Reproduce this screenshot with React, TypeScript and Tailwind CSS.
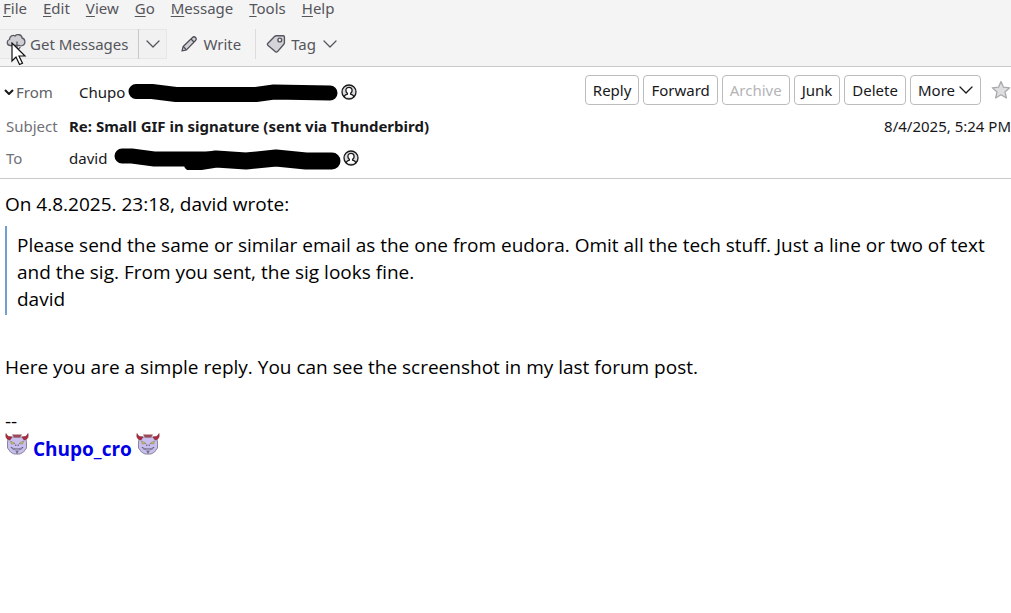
import type { ReactNode } from 'react';

const menus = ['File', 'Edit', 'View', 'Go', 'Message', 'Tools', 'Help'];

function Chevron({ className }: { className?: string }) {
  return (
    <svg viewBox="0 0 14 8" fill="none" stroke="currentColor" strokeWidth="1.3" strokeLinecap="round" strokeLinejoin="round" className={`h-2 w-[14px] ${className ?? ''}`}>
      <path d="M1 1l6 6 6-6" />
    </svg>
  );
}

function CloudDownload() {
  return (
    <svg viewBox="0 0 20 20" fill="#cfcfd4" stroke="#5b5b66" strokeWidth="1.3" strokeLinecap="round" strokeLinejoin="round" className="h-5 w-5">
      <path d="M4.500 11.500C.5 11.500.3 6.500 3.500 5.500 3.500 2 7 .5 9 2c2-2.500 7-1.500 7 2 3.500.5 4 6.500.5 7.500-1 .5-2 .3-3 0h-6c-1 .3-2 .3-3 0z" />
      <path d="M11 8v8M8 13.500l3 3 3-3" fill="none" />
    </svg>
  );
}

function Pencil() {
  return (
    <svg viewBox="0 0 16 16" fill="#cfcfd4" stroke="#4a4a52" strokeWidth="1.2" strokeLinejoin="round" className="h-4 w-4">
      <path d="M1 15l1.200-4.500L11.500 1.500a2 2 0 0 1 3 3L5.500 13.800z" />
      <path d="M10 3l3 3M2.200 10.500l3.300 3.300" />
    </svg>
  );
}

function TagIcon() {
  return (
    <svg viewBox="0 0 20 20" fill="#d4d4d8" stroke="#55555f" strokeWidth="1.4" strokeLinejoin="round" className="h-5 w-5">
      <path d="M1.700 9.500L8.500 2.600Q9.200 1.800 10.200 1.800H17.300Q18.400 1.800 18.400 3V8.500Q18.400 9.500 17.800 10.200L11.500 17.600Q10.500 18.600 9.500 17.700L1.800 11.200Q1 10.300 1.700 9.500z" />
      <circle cx="13.800" cy="6" r="1.900" fill="#f4f4f4" />
    </svg>
  );
}

function Contact() {
  return (
    <svg viewBox="0 0 16 16" fill="#fff" stroke="#18181b" strokeWidth="1.3" strokeLinejoin="round" className="h-4 w-4 shrink-0">
      <circle cx="8" cy="8" r="7" fill="#dcdcdf" />
      <path d="M3.500 13v-1c.3-1 1.500-1.400 2.900-1.800V9.300C5.300 8.600 4.900 7.600 4.900 6.500c0-2 1.200-3.200 3.100-3.200s3.100 1.200 3.100 3.200c0 1.100-.4 2.100-1.500 2.800v.9c1.400.4 2.600.8 2.900 1.800v1" />
    </svg>
  );
}

function Devil() {
  return (
    <svg viewBox="0 0 24 22" className="h-[22px] w-6">
      <path d="M3.500 4h17l1 5v6l-3 4-3.500 2H9l-3.500-2-3-4V9z" fill="#c9bfee" stroke="#8a86a0" />
      <path d="M7 1.500h10l-2 3H9z" fill="#9c4a58" />
      <path d="M1 .5c-.7 4 .5 6 4 6.500L7 4C4 4 2 3 1 .5zM23 .5c.7 4-.5 6-4 6.500L17 4c3 0 5-1 6-3.500z" fill="#b02a3c" stroke="#732035" strokeWidth=".5" />
      <path d="M5.500 8l4.500 2.500-3.500.5zM18.500 8L14 10.500l3.500.5z" fill="#e3d44e" stroke="#7d755c" strokeWidth=".6" />
      <path d="M10.800 11.500v1.500M13.200 11.500v1.500" stroke="#554d75" />
      <path d="M6 14c2 2.500 10 2.500 12 0-1 4-11 4-12 0z" fill="#fff" stroke="#5c5678" strokeWidth=".8" />
      <path d="M10.500 18h3L12 21.500z" fill="#737080" />
    </svg>
  );
}

function Cursor() {
  return (
    <svg viewBox="0 0 16 24" fill="#fff" stroke="#111" strokeWidth="1.2" className="absolute top-[42px] left-[11px] h-6 w-4">
      <path d="M1 1v18l4-4 3.500 7.500 3-1.300L8 14h6z" />
    </svg>
  );
}

function HeaderButton({ children, disabled }: { children: ReactNode; disabled?: boolean }) {
  return (
    <button
      disabled={disabled}
      className="flex h-[30px] items-center gap-1 rounded border border-[#bcbcbf] px-[7px] whitespace-nowrap disabled:text-[#b4b4b7]"
    >
      {children}
    </button>
  );
}

export default function App() {
  return (
    <div className="min-h-screen bg-white font-['Noto_Sans',sans-serif] text-[15px] leading-5 text-[#18181b]">
      <header className="relative border-b border-[#c9c9c9] bg-[#f4f4f4] text-[#55555c]">
        <nav className="flex h-4 items-center gap-4 px-[3px]">
          {menus.map((name) => (
            <button key={name} className="leading-[18px]">
              <span className="underline underline-offset-2">{name[0]}</span>
              {name.slice(1)}
            </button>
          ))}
        </nav>
        <div className="flex h-[50px] items-center pt-[6px]">
          <div className="flex h-[30px] items-center border-y border-r border-[#e6e6e6] bg-[#f1f1f1]">
            <button className="flex items-center gap-1 pr-[10px] pl-[6px]">
              <CloudDownload />
              Get Messages
            </button>
            <button aria-label="Get messages options" className="flex h-[30px] w-7 items-center justify-center border-l border-[#c8c8c8]">
              <Chevron />
            </button>
          </div>
          <button className="flex items-center gap-[6px] px-[14px]">
            <Pencil />
            Write
          </button>
          <button className="flex h-[30px] items-center gap-[5px] border-l border-[#dcdcdc] pl-[10px]">
            <TagIcon />
            Tag
            <Chevron className="ml-[2px]" />
          </button>
        </div>
        <Cursor />
      </header>

      <section className="border-b border-[#c9c9c9] pb-[2px]">
        <div className="flex h-[45px] items-center justify-between">
          <div className="flex items-center pt-[5px]">
            <button className="flex w-[79px] items-center gap-[2px] pl-1 text-[#5f5f66]">
              <svg viewBox="0 0 10 6" fill="none" stroke="#18181b" strokeWidth="2" className="h-[6px] w-[10px]">
                <path d="M1 1l4 4 4-4" />
              </svg>
              From
            </button>
            <span>Chupo</span>
            <svg viewBox="0 0 216 20" className="h-5 w-[216px]">
              <path d="M11 9.500h16l24 3h80l18-2.500 56 1" fill="none" stroke="#000" strokeWidth="15" strokeLinecap="round" strokeLinejoin="round" />
            </svg>
            <Contact />
          </div>
          <div className="flex items-center gap-1">
            <HeaderButton>Reply</HeaderButton>
            <HeaderButton>Forward</HeaderButton>
            <HeaderButton disabled>Archive</HeaderButton>
            <HeaderButton>Junk</HeaderButton>
            <HeaderButton>Delete</HeaderButton>
            <HeaderButton>
              More
              <Chevron />
            </HeaderButton>
            <button aria-label="Star message" className="ml-[6px]">
              <svg viewBox="0 0 20 20" fill="#dedee0" stroke="#aaaaae" strokeWidth="1.3" strokeLinejoin="round" className="h-5 w-5">
                <path d="M10 1.500l2.500 5.700 6.200.6-4.700 4.100 1.400 6.100L10 14.800 4.600 18 6 11.900 1.300 7.800l6.200-.6z" />
              </svg>
            </button>
          </div>
        </div>
        <div className="flex h-7 items-center">
          <span className="w-[69px] pl-[6px] text-[#707077]">Subject</span>
          <h1 className="font-bold">Re: Small GIF in signature (sent via Thunderbird)</h1>
          <time className="ml-auto">8/4/2025, 5:24 PM</time>
        </div>
        <div className="flex h-9 items-center">
          <span className="w-[69px] pl-[6px] text-[#707077]">To</span>
          <span>david</span>
          <svg viewBox="0 0 236 24" className="h-6 w-[236px]">
            <path d="M15 10h10l22 3h70" fill="none" stroke="#000" strokeWidth="15" strokeLinecap="round" />
            <path d="M85 17l24-4 30 2 30-3 30 3h26" fill="none" stroke="#000" strokeWidth="17" strokeLinecap="round" strokeLinejoin="round" />
          </svg>
          <Contact />
        </div>
      </section>

      <main className="px-[5px] pt-3 font-['Open_Sans',sans-serif] text-[19px] leading-[27px] text-black">
        <p>On 4.8.2025. 23:18, david wrote:</p>
        <blockquote className="mt-2 border-l-2 border-[#729fcf] pt-[6px] pb-[2px] pl-[10px]">
          Please send the same or similar email as the one from eudora. Omit all the tech stuff. Just a line or two of text and the sig. From you sent, the sig looks fine.
          <br />
          david
        </blockquote>
        <p className="mt-[39px]">Here you are a simple reply. You can see the screenshot in my last forum post.</p>
        <footer className="mt-7 leading-6">
          <p>--</p>
          <div className="flex gap-1">
            <Devil />
            <strong className="pt-1 font-['Comic_Sans_MS','Open_Sans',sans-serif] text-[#0000e6]">Chupo_cro</strong>
            <Devil />
          </div>
        </footer>
      </main>
    </div>
  );
}
